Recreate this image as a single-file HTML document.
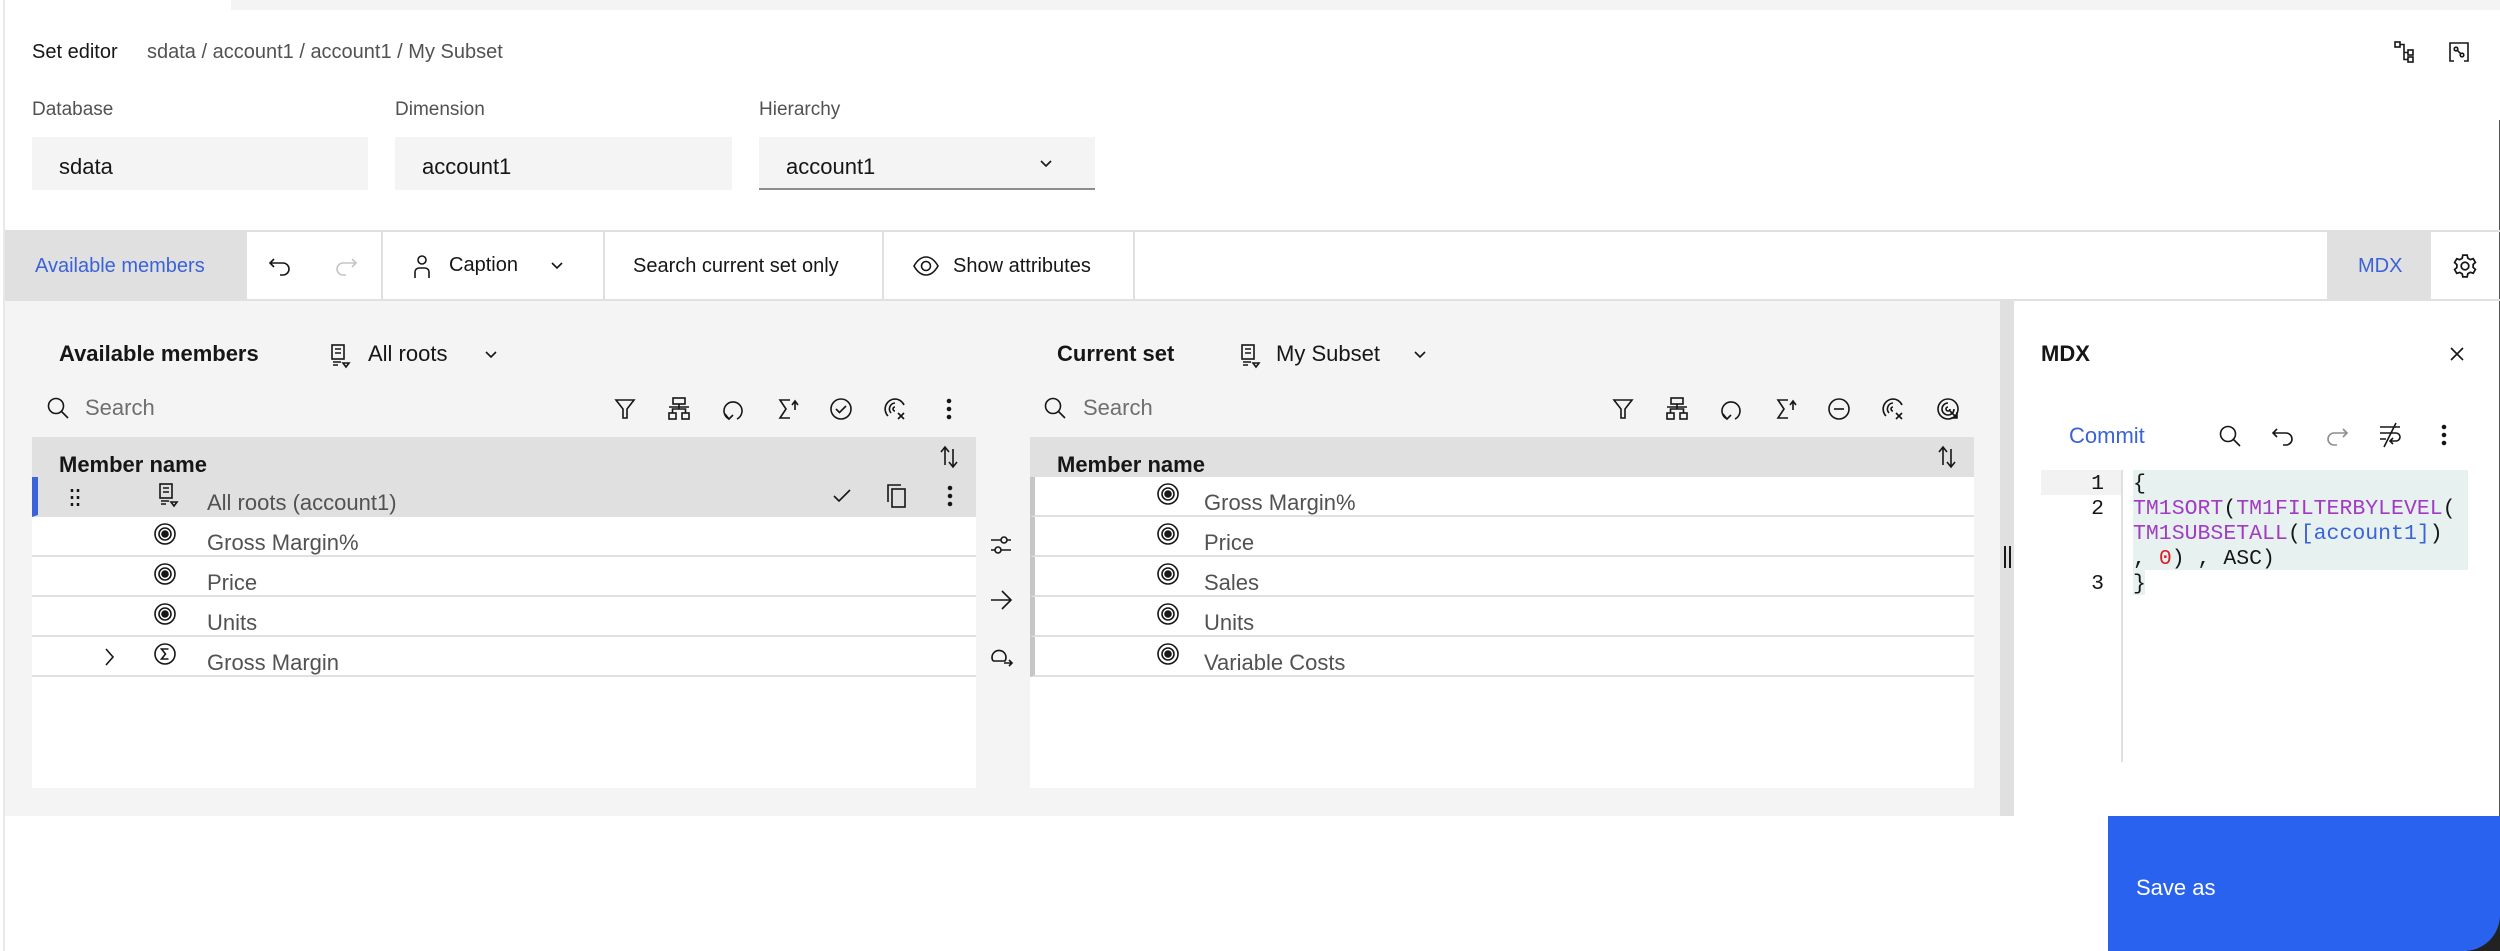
<!DOCTYPE html>
<html><head><meta charset="utf-8"><style>
*{box-sizing:border-box;margin:0;padding:0}
body{width:2500px;height:951px;overflow:hidden;background:#fff;font-family:"Liberation Sans",sans-serif;color:#161616;position:relative}
.a{position:absolute}
.t{position:absolute;white-space:nowrap;line-height:1}
svg{position:absolute;overflow:visible}
svg *{fill:none;stroke:#161616;stroke-width:1.6}
.inp{position:absolute;background:#f4f4f4;top:137px;height:53px;font-size:22px;padding:17px 0 0 27px;color:#161616}
.row{position:absolute;height:40px;background:#fff;border-bottom:2px solid #e0e0e0}
.rt{position:absolute;top:13px;font-size:22px;color:#525252;white-space:nowrap}
.mono{font-family:"Liberation Mono",monospace;font-size:21.5px}
</style></head><body>
<div class="a" style="left:231px;top:0;width:2269px;height:10px;background:#f4f4f4"></div>
<div class="a" style="left:3px;top:0;width:2px;height:951px;background:#e8e8e8"></div>
<div class="a" style="left:2499px;top:120px;width:1px;height:831px;background:#555"></div>

<div class="t" style="left:32px;top:42px;font-size:20px">Set editor</div>
<div class="t" style="left:147px;top:42px;font-size:20px;color:#525252">sdata / account1 / account1 / My Subset</div>
<svg style="left:2393px;top:40px" width="24" height="24" viewBox="0 0 24 24"><rect x="2" y="2" width="5" height="5"/><rect x="15" y="10" width="5" height="5"/><rect x="15" y="17" width="5" height="5"/><path d="M7 4.5h4v15h4M11 12.5h4"/></svg>
<svg style="left:2447px;top:40px" width="24" height="24" viewBox="0 0 24 24"><path d="M7 3H3v18h4M17 3h4v18h-4M7 3h10"/><circle cx="9" cy="9" r="1.8"/><circle cx="15" cy="15" r="1.8"/><path d="M10.3 10.3l3.4 3.4"/></svg>

<div class="t" style="left:32px;top:100px;font-size:19px;color:#525252">Database</div>
<div class="t" style="left:395px;top:100px;font-size:19px;color:#525252">Dimension</div>
<div class="t" style="left:759px;top:100px;font-size:19px;color:#525252">Hierarchy</div>
<div class="inp" style="left:32px;width:336px">sdata</div>
<div class="inp" style="left:395px;width:337px">account1</div>
<div class="inp" style="left:759px;width:336px;border-bottom:2px solid #8d8d8d">account1</div>
<svg style="left:1038px;top:156px" width="16" height="16" viewBox="0 0 16 16"><path d="M3 5l5 5 5-5"/></svg>

<div class="a" style="left:5px;top:230px;width:2495px;height:2px;background:#e0e0e0"></div>
<div class="a" style="left:5px;top:299px;width:2495px;height:2px;background:#e0e0e0"></div>
<div class="a" style="left:5px;top:232px;width:242px;height:67px;background:#e0e0e0"></div>
<div class="t" style="left:35px;top:256px;font-size:20px;color:#3b63d8">Available members</div>
<svg style="left:268px;top:256px" width="24" height="20" viewBox="0 0 24 20"><path d="M6 3L2 7l4 4M2 7h13a6 6 0 0 1 0 12h-3"/></svg>
<svg style="left:334px;top:256px" width="24" height="20" viewBox="0 0 24 20"><path d="M18 3l4 4-4 4M22 7H9a6 6 0 0 0 0 12h3" style="stroke:#c6c6c6"/></svg>
<div class="a" style="left:381px;top:232px;width:2px;height:67px;background:#e0e0e0"></div>
<svg style="left:412px;top:254px" width="20" height="26" viewBox="0 0 20 26"><circle cx="10" cy="6" r="4"/><path d="M3 24v-6a4 4 0 0 1 4-4h6a4 4 0 0 1 4 4v6"/></svg>
<div class="t" style="left:449px;top:255px;font-size:20px">Caption</div>
<svg style="left:549px;top:258px" width="16" height="16" viewBox="0 0 16 16"><path d="M3 5l5 5 5-5"/></svg>
<div class="a" style="left:603px;top:232px;width:2px;height:67px;background:#e0e0e0"></div>
<div class="t" style="left:633px;top:256px;font-size:20px">Search current set only</div>
<div class="a" style="left:882px;top:232px;width:2px;height:67px;background:#e0e0e0"></div>
<svg style="left:913px;top:255px" width="26" height="22" viewBox="0 0 26 22"><path d="M1 11C5 4 9 2 13 2s8 2 12 9c-4 7-8 9-12 9s-8-2-12-9z"/><circle cx="13" cy="11" r="4.5"/></svg>
<div class="t" style="left:953px;top:256px;font-size:20px">Show attributes</div>
<div class="a" style="left:1133px;top:232px;width:2px;height:67px;background:#e0e0e0"></div>
<div class="a" style="left:2327px;top:232px;width:104px;height:67px;background:#e0e0e0"></div>
<div class="t" style="left:2358px;top:256px;font-size:20px;color:#3b63d8">MDX</div>
<svg style="left:2452px;top:253px" width="26" height="26" viewBox="0 0 24 24"><circle cx="12" cy="12" r="3.5"/><path d="M10 2h4l.6 2.8 2.3 1.3 2.7-.9 2 3.5-2.1 1.9v2.7l2.1 1.9-2 3.5-2.7-.9-2.3 1.3L14 22h-4l-.6-2.8-2.3-1.3-2.7.9-2-3.5 2.1-1.9v-2.7L2.4 8.8l2-3.5 2.7.9 2.3-1.3z"/></svg>

<div class="a" style="left:5px;top:301px;width:1995px;height:515px;background:#f4f4f4"></div>
<div class="a" style="left:2000px;top:301px;width:14px;height:515px;background:#e0e0e0"></div>
<div class="a" style="left:2004px;top:546px;width:2px;height:22px;background:#161616"></div>
<div class="a" style="left:2009px;top:546px;width:2px;height:22px;background:#161616"></div>

<div class="t" style="left:59px;top:343px;font-size:22px;font-weight:bold">Available members</div>
<svg style="left:330px;top:344px" width="20" height="24" viewBox="0 0 20 24"><rect x="2" y="1" width="12" height="14"/><path d="M5 5h6M5 9h6M3 18h8M3 21h5M13 19h6l-3 4z"/></svg>
<div class="t" style="left:368px;top:343px;font-size:22px">All roots</div>
<svg style="left:483px;top:347px" width="16" height="16" viewBox="0 0 16 16"><path d="M3 5l5 5 5-5"/></svg>
<svg style="left:46px;top:396px" width="24" height="24" viewBox="0 0 24 24"><circle cx="10" cy="10" r="7.5"/><path d="M15.5 15.5L22 22"/></svg>
<div class="t" style="left:85px;top:397px;font-size:22px;color:#6f6f6f">Search</div>
<svg style="left:614px;top:398px" width="22" height="22" viewBox="0 0 22 22"><path d="M2 2h18l-7 9v9h-4v-9z"/></svg>
<svg style="left:668px;top:397px" width="22" height="24" viewBox="0 0 22 24"><rect x="5" y="1" width="12" height="6"/><rect x="1" y="16" width="7" height="6"/><rect x="14" y="16" width="7" height="6"/><path d="M11 7v5M4.5 16v-4h13v4M1 10h20"/></svg>
<svg style="left:722px;top:397px" width="22" height="24" viewBox="0 0 22 24"><path d="M7 22a9 9 0 1 1 8 0M3 17l4 5 4-4"/></svg>
<svg style="left:777px;top:397px" width="22" height="24" viewBox="0 0 22 24"><path d="M13 3H3l6 9-6 9h10M15 8l3-4 3 4M18 4v9"/></svg>
<svg style="left:829px;top:397px" width="24" height="24" viewBox="0 0 24 24"><circle cx="12" cy="12" r="10"/><path d="M7 12l3.5 3.5L17 9"/></svg>
<svg style="left:883px;top:397px" width="24" height="24" viewBox="0 0 24 24"><path d="M12 2a10 10 0 0 0-7 17M12 6a6 6 0 0 0-4 10M12 10a2 2 0 1 0 0 4M15 16l6 6M21 16l-6 6M12 2a10 10 0 0 1 9 6"/></svg>
<svg style="left:945px;top:398px" width="8" height="22" viewBox="0 0 8 22"><circle cx="4" cy="3" r="1.5" style="fill:#161616"/><circle cx="4" cy="11" r="1.5" style="fill:#161616"/><circle cx="4" cy="19" r="1.5" style="fill:#161616"/></svg>

<div class="a" style="left:32px;top:437px;width:944px;height:40px;background:#e0e0e0"></div>
<div class="t" style="left:59px;top:454px;font-size:22px;font-weight:bold">Member name</div>
<svg style="left:937px;top:445px" width="24" height="24" viewBox="0 0 24 24"><path d="M4 7l4-5 4 5M8 2v18M12 17l4 5 4-5M16 22V4"/></svg>
<div class="a" style="left:32px;top:477px;width:944px;height:311px;background:#fff"></div>
<div class="row" style="left:32px;top:477px;width:944px;background:#e0e0e0;border-left:6px solid #3b63d8">
 <svg style="left:32px;top:10px" width="10" height="20" viewBox="0 0 10 20"><path d="M2 2v3M8 2v3M2 9v3M8 9v3M2 16v3M8 16v3" style="stroke-width:2.5"/></svg>
 <svg style="left:120px;top:6px" width="20" height="24" viewBox="0 0 20 24"><rect x="2" y="1" width="12" height="14"/><path d="M5 5h6M5 9h6M3 18h8M3 21h5M13 19h6l-3 4z"/></svg>
 <div class="rt" style="left:169px">All roots (account1)</div>
 <svg style="left:794px;top:11px" width="20" height="16" viewBox="0 0 20 16"><path d="M2 8l5 5L18 2"/></svg>
 <svg style="left:848px;top:6px" width="22" height="26" viewBox="0 0 22 26"><rect x="6" y="6" width="13" height="18"/><path d="M2 19V2h13"/></svg>
 <svg style="left:908px;top:8px" width="8" height="22" viewBox="0 0 8 22"><circle cx="4" cy="3" r="1.5" style="fill:#161616"/><circle cx="4" cy="11" r="1.5" style="fill:#161616"/><circle cx="4" cy="19" r="1.5" style="fill:#161616"/></svg>
</div>
<div class="row" style="left:32px;top:517px;width:944px"><svg style="left:122px;top:6px" width="22" height="24" viewBox="0 0 22 24"><circle cx="11" cy="11" r="10"/><circle cx="11" cy="11" r="6"/><circle cx="11" cy="11" r="3" style="fill:#161616"/></svg><div class="rt" style="left:175px">Gross Margin%</div></div>
<div class="row" style="left:32px;top:557px;width:944px"><svg style="left:122px;top:6px" width="22" height="24" viewBox="0 0 22 24"><circle cx="11" cy="11" r="10"/><circle cx="11" cy="11" r="6"/><circle cx="11" cy="11" r="3" style="fill:#161616"/></svg><div class="rt" style="left:175px">Price</div></div>
<div class="row" style="left:32px;top:597px;width:944px"><svg style="left:122px;top:6px" width="22" height="24" viewBox="0 0 22 24"><circle cx="11" cy="11" r="10"/><circle cx="11" cy="11" r="6"/><circle cx="11" cy="11" r="3" style="fill:#161616"/></svg><div class="rt" style="left:175px">Units</div></div>
<div class="row" style="left:32px;top:637px;width:944px"><svg style="left:71px;top:10px" width="12" height="20" viewBox="0 0 12 20"><path d="M3 2l7 8-7 8"/></svg><svg style="left:122px;top:6px" width="22" height="24" viewBox="0 0 22 24"><circle cx="11" cy="11" r="10"/><path d="M14.5 6H7.5l4 5-4 5h7"/></svg><div class="rt" style="left:175px">Gross Margin</div></div>

<svg style="left:989px;top:533px" width="24" height="24" viewBox="0 0 24 24"><path d="M2 7h20M2 17h20"/><circle cx="15" cy="7" r="3" style="fill:#f4f4f4"/><circle cx="9" cy="17" r="3" style="fill:#f4f4f4"/></svg>
<svg style="left:989px;top:589px" width="24" height="22" viewBox="0 0 24 22"><path d="M2 11h20M13 2l9 9-9 9"/></svg>
<svg style="left:989px;top:643px" width="24" height="24" viewBox="0 0 24 24"><path d="M4 18a7 7 0 1 1 12 0H4M15 20h8M20 17l3 3-3 3"/></svg>

<div class="t" style="left:1057px;top:343px;font-size:22px;font-weight:bold">Current set</div>
<svg style="left:1240px;top:344px" width="20" height="24" viewBox="0 0 20 24"><rect x="2" y="1" width="12" height="14"/><path d="M5 5h6M5 9h6M3 18h8M3 21h5M13 19h6l-3 4z"/></svg>
<div class="t" style="left:1276px;top:343px;font-size:22px">My Subset</div>
<svg style="left:1412px;top:347px" width="16" height="16" viewBox="0 0 16 16"><path d="M3 5l5 5 5-5"/></svg>
<svg style="left:1043px;top:396px" width="24" height="24" viewBox="0 0 24 24"><circle cx="10" cy="10" r="7.5"/><path d="M15.5 15.5L22 22"/></svg>
<div class="t" style="left:1083px;top:397px;font-size:22px;color:#6f6f6f">Search</div>
<svg style="left:1612px;top:398px" width="22" height="22" viewBox="0 0 22 22"><path d="M2 2h18l-7 9v9h-4v-9z"/></svg>
<svg style="left:1666px;top:397px" width="22" height="24" viewBox="0 0 22 24"><rect x="5" y="1" width="12" height="6"/><rect x="1" y="16" width="7" height="6"/><rect x="14" y="16" width="7" height="6"/><path d="M11 7v5M4.5 16v-4h13v4M1 10h20"/></svg>
<svg style="left:1720px;top:397px" width="22" height="24" viewBox="0 0 22 24"><path d="M7 22a9 9 0 1 1 8 0M3 17l4 5 4-4"/></svg>
<svg style="left:1775px;top:397px" width="22" height="24" viewBox="0 0 22 24"><path d="M13 3H3l6 9-6 9h10M15 8l3-4 3 4M18 4v9"/></svg>
<svg style="left:1827px;top:397px" width="24" height="24" viewBox="0 0 24 24"><circle cx="12" cy="12" r="10"/><path d="M7 12h10"/></svg>
<svg style="left:1881px;top:397px" width="24" height="24" viewBox="0 0 24 24"><path d="M12 2a10 10 0 0 0-7 17M12 6a6 6 0 0 0-4 10M12 10a2 2 0 1 0 0 4M15 16l6 6M21 16l-6 6M12 2a10 10 0 0 1 9 6"/></svg>
<svg style="left:1936px;top:397px" width="24" height="24" viewBox="0 0 24 24"><circle cx="12" cy="12" r="10"/><path d="M12 6a6 6 0 1 0 6 6M12 10a2 2 0 1 0 2 2M14 14l7 7M15 21h6v-6"/></svg>

<div class="a" style="left:1030px;top:437px;width:944px;height:40px;background:#e0e0e0"></div>
<div class="t" style="left:1057px;top:454px;font-size:22px;font-weight:bold">Member name</div>
<svg style="left:1935px;top:445px" width="24" height="24" viewBox="0 0 24 24"><path d="M4 7l4-5 4 5M8 2v18M12 17l4 5 4-5M16 22V4"/></svg>
<div class="a" style="left:1030px;top:477px;width:944px;height:311px;background:#fff"></div>
<div class="row" style="left:1030px;top:477px;width:944px;border-left:5px solid #c6c6c6"><svg style="left:122px;top:6px" width="22" height="24" viewBox="0 0 22 24"><circle cx="11" cy="11" r="10"/><circle cx="11" cy="11" r="6"/><circle cx="11" cy="11" r="3" style="fill:#161616"/></svg><div class="rt" style="left:169px">Gross Margin%</div></div>
<div class="row" style="left:1030px;top:517px;width:944px;border-left:5px solid #c6c6c6"><svg style="left:122px;top:6px" width="22" height="24" viewBox="0 0 22 24"><circle cx="11" cy="11" r="10"/><circle cx="11" cy="11" r="6"/><circle cx="11" cy="11" r="3" style="fill:#161616"/></svg><div class="rt" style="left:169px">Price</div></div>
<div class="row" style="left:1030px;top:557px;width:944px;border-left:5px solid #c6c6c6"><svg style="left:122px;top:6px" width="22" height="24" viewBox="0 0 22 24"><circle cx="11" cy="11" r="10"/><circle cx="11" cy="11" r="6"/><circle cx="11" cy="11" r="3" style="fill:#161616"/></svg><div class="rt" style="left:169px">Sales</div></div>
<div class="row" style="left:1030px;top:597px;width:944px;border-left:5px solid #c6c6c6"><svg style="left:122px;top:6px" width="22" height="24" viewBox="0 0 22 24"><circle cx="11" cy="11" r="10"/><circle cx="11" cy="11" r="6"/><circle cx="11" cy="11" r="3" style="fill:#161616"/></svg><div class="rt" style="left:169px">Units</div></div>
<div class="row" style="left:1030px;top:637px;width:944px;border-left:5px solid #c6c6c6"><svg style="left:122px;top:6px" width="22" height="24" viewBox="0 0 22 24"><circle cx="11" cy="11" r="10"/><circle cx="11" cy="11" r="6"/><circle cx="11" cy="11" r="3" style="fill:#161616"/></svg><div class="rt" style="left:169px">Variable Costs</div></div>

<div class="t" style="left:2041px;top:343px;font-size:22px;font-weight:bold">MDX</div>
<svg style="left:2449px;top:346px" width="16" height="16" viewBox="0 0 16 16"><path d="M2 2l12 12M14 2L2 14"/></svg>
<div class="t" style="left:2069px;top:425px;font-size:22px;color:#3b63d8">Commit</div>
<svg style="left:2218px;top:424px" width="24" height="24" viewBox="0 0 24 24"><circle cx="10" cy="10" r="7.5"/><path d="M15.5 15.5L22 22"/></svg>
<svg style="left:2271px;top:426px" width="24" height="20" viewBox="0 0 24 20"><path d="M6 3L2 7l4 4M2 7h13a6 6 0 0 1 0 12h-3"/></svg>
<svg style="left:2325px;top:426px" width="24" height="20" viewBox="0 0 24 20"><path d="M18 3l4 4-4 4M22 7H9a6 6 0 0 0 0 12h3" style="stroke:#8d8d8d"/></svg>
<svg style="left:2378px;top:422px" width="24" height="26" viewBox="0 0 24 26"><path d="M2 5h20M2 11h16a4 4 0 0 1 0 8h-6M15 16l-3 3 3 3M2 17h6M18 1L6 25"/></svg>
<svg style="left:2440px;top:424px" width="8" height="22" viewBox="0 0 8 22"><circle cx="4" cy="3" r="1.5" style="fill:#161616"/><circle cx="4" cy="11" r="1.5" style="fill:#161616"/><circle cx="4" cy="19" r="1.5" style="fill:#161616"/></svg>

<div class="a" style="left:2041px;top:470px;width:80px;height:25px;background:#f2f2f2"></div>
<div class="a" style="left:2121px;top:470px;width:2px;height:292px;background:#e0e0e0"></div>
<div class="a" style="left:2133px;top:470px;width:335px;height:100px;background:#e6f1f0"></div>
<div class="a" style="left:2133px;top:570px;width:12px;height:25px;background:#e6f1f0"></div>
<div class="t mono" style="left:2084px;top:472px;line-height:25px;text-align:right;width:20px">1<br>2<br><br><br>3</div>
<div class="t mono" style="left:2133px;top:472px;line-height:25px;color:#161616">{<br><span style="color:#a23bc4">TM1SORT</span>(<span style="color:#a23bc4">TM1FILTERBYLEVEL</span>(<br><span style="color:#a23bc4">TM1SUBSETALL</span>(<span style="color:#3b63d8">[account1]</span>)<br>, <span style="color:#da1e28">0</span>) , ASC)<br>}</div>

<div class="a" style="left:2466px;top:912px;width:34px;height:39px;background:#222"></div>
<div class="a" style="left:2108px;top:816px;width:392px;height:135px;background:#2a62f0;border-bottom-right-radius:36px"></div>
<div class="t" style="left:2136px;top:877px;font-size:22px;color:#fff">Save as</div>
</body></html>
